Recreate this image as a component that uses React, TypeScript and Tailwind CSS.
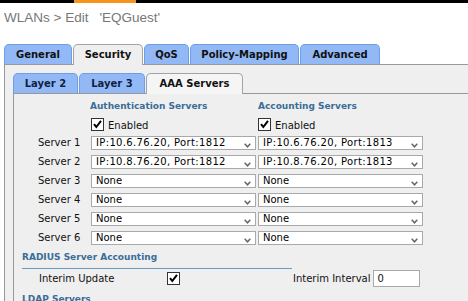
import React from 'react';

interface TabProps {
    label: string;
    active?: boolean;
    sub?: boolean;
    className: string;
}

const Tab: React.FC<TabProps> = ({ label, active, sub, className }) => (
    <div
        className={`${className} ${active ? 'h-[21px] border-[#a3a3a3] bg-[#efefef] text-[#111]' : `h-[20px] border-[#6d9ee6] bg-[#92b9f6] ${sub ? 'text-[#0f1f45]' : 'text-[#111]'}`} rounded-t-[5px] border border-b-0 flex items-center justify-center font-bold text-[10px] leading-none`}
    >
        {label}
    </div>
);

const CheckBox: React.FC = () => (
    <span className="w-[13px] h-[13px] shrink-0 border border-[#333] bg-white flex items-center justify-center">
        <svg width="11" height="11" viewBox="0 0 11 11">
            <path d="M2 5.2 L4.3 8 L9 1.8" fill="none" stroke="#000" strokeWidth="2" />
        </svg>
    </span>
);

const Select: React.FC<{ value: string }> = ({ value }) => (
    <div className="w-[165px] h-[14px] border border-[#a9a9a9] bg-white flex items-center">
        <span className={`flex-1 pl-[4px] text-[10px] leading-none text-black ${value.startsWith('IP') ? 'tracking-[0.35px]' : ''}`}>
            {value}
        </span>
        <svg className="self-end mb-[1px] mr-[4px]" width="7" height="5" viewBox="0 0 7 5">
            <polyline points="0.7,0.7 3.5,3.8 6.3,0.7" fill="none" stroke="#666" strokeWidth="1.5" />
        </svg>
    </div>
);

const servers = [
    { n: 1, auth: 'IP:10.6.76.20, Port:1812', acct: 'IP:10.6.76.20, Port:1813' },
    { n: 2, auth: 'IP:10.8.76.20, Port:1812', acct: 'IP:10.8.76.20, Port:1813' },
    { n: 3, auth: 'None', acct: 'None' },
    { n: 4, auth: 'None', acct: 'None' },
    { n: 5, auth: 'None', acct: 'None' },
    { n: 6, auth: 'None', acct: 'None' },
];

export default function App() {
    return (
        <div className="w-full h-[301px] overflow-hidden bg-white font-['DejaVu_Sans',Verdana,sans-serif] text-[10px] text-[#111] flex flex-col">
            {/* top bar */}
            <div className="h-[3px] shrink-0 bg-black flex">
                <div className="ml-[74px] w-[62px] bg-[#f7941e]" />
            </div>

            {/* page title */}
            <div className="mt-[7px] ml-[4px] h-[15px] leading-[15px] text-[13.5px] font-['Liberation_Sans',Arial,sans-serif] text-[#777] flex whitespace-nowrap">
                <span>WLANs &gt; Edit</span>
                <span className="ml-[11px]">'EQGuest'</span>
            </div>

            {/* main tabs */}
            <div className="mt-[19px] ml-[4px] h-[21px] -mb-px relative z-10 flex items-start gap-px">
                <Tab label="General" className="w-[68px]" />
                <Tab label="Security" className="w-[70px]" active />
                <Tab label="QoS" className="w-[45px]" />
                <Tab label="Policy-Mapping" className="w-[109px]" />
                <Tab label="Advanced" className="w-[80px]" />
            </div>

            <div className="ml-[4px] flex-1 border-l border-t border-[#999] bg-[#efefef] pt-[8px] pl-[8px] flex flex-col">
                {/* sub tabs */}
                <div className="h-[21px] -mb-px relative z-10 flex items-start gap-px">
                    <Tab label="Layer 2" className="w-[65px]" sub />
                    <Tab label="Layer 3" className="w-[66px]" sub />
                    <Tab label="AAA Servers" className="w-[97px] !bg-[#f5f5f5]" active />
                </div>

                <div className="flex-1 border-l border-t border-[#999] pt-[7px] flex flex-col">
                    <div className="h-[11px] flex text-[9px] font-bold leading-[11px] text-[#3a6d97] whitespace-nowrap">
                        <span className="w-[76px]" />
                        <span className="w-[167px]">Authentication Servers</span>
                        <span className="ml-[1px]">Accounting Servers</span>
                    </div>

                    <div className="mt-[6px] h-[13px] flex items-end">
                        <span className="w-[77px]" />
                        <div className="w-[165px] flex items-end">
                            <CheckBox />
                            <span className="ml-[4px] leading-[11px]">Enabled</span>
                        </div>
                        <div className="ml-[2px] flex items-end">
                            <CheckBox />
                            <span className="ml-[4px] leading-[11px]">Enabled</span>
                        </div>
                    </div>

                    {servers.map((s) => (
                        <div key={s.n} className="mt-[5px] h-[14px] flex items-center">
                            <span className="w-[77px] pl-[24px] leading-none">Server {s.n}</span>
                            <Select value={s.auth} />
                            <div className="ml-[2px]">
                                <Select value={s.acct} />
                            </div>
                        </div>
                    ))}

                    {/* RADIUS accounting */}
                    <div className="mt-[7px] ml-[8px] w-[270px] border-b border-[#6a9abd] pb-[5px] text-[9px] font-bold leading-[11px] text-[#3a6d97]">
                        RADIUS Server Accounting
                    </div>
                    <div className="mt-[1px] h-[17px] flex items-center">
                        <span className="w-[153px] pl-[25px] leading-none">Interim Update</span>
                        <CheckBox />
                        <span className="ml-[113px] leading-none">Interim Interval</span>
                        <div className="ml-[3px] w-[47px] h-[17px] border border-[#a9a9a9] bg-white pl-[3px] flex items-center leading-none">
                            0
                        </div>
                    </div>

                    <div className="mt-[7px] ml-[8px] text-[9px] font-bold leading-[11px] text-[#3a6d97]">LDAP Servers</div>
                </div>
            </div>
        </div>
    );
}
